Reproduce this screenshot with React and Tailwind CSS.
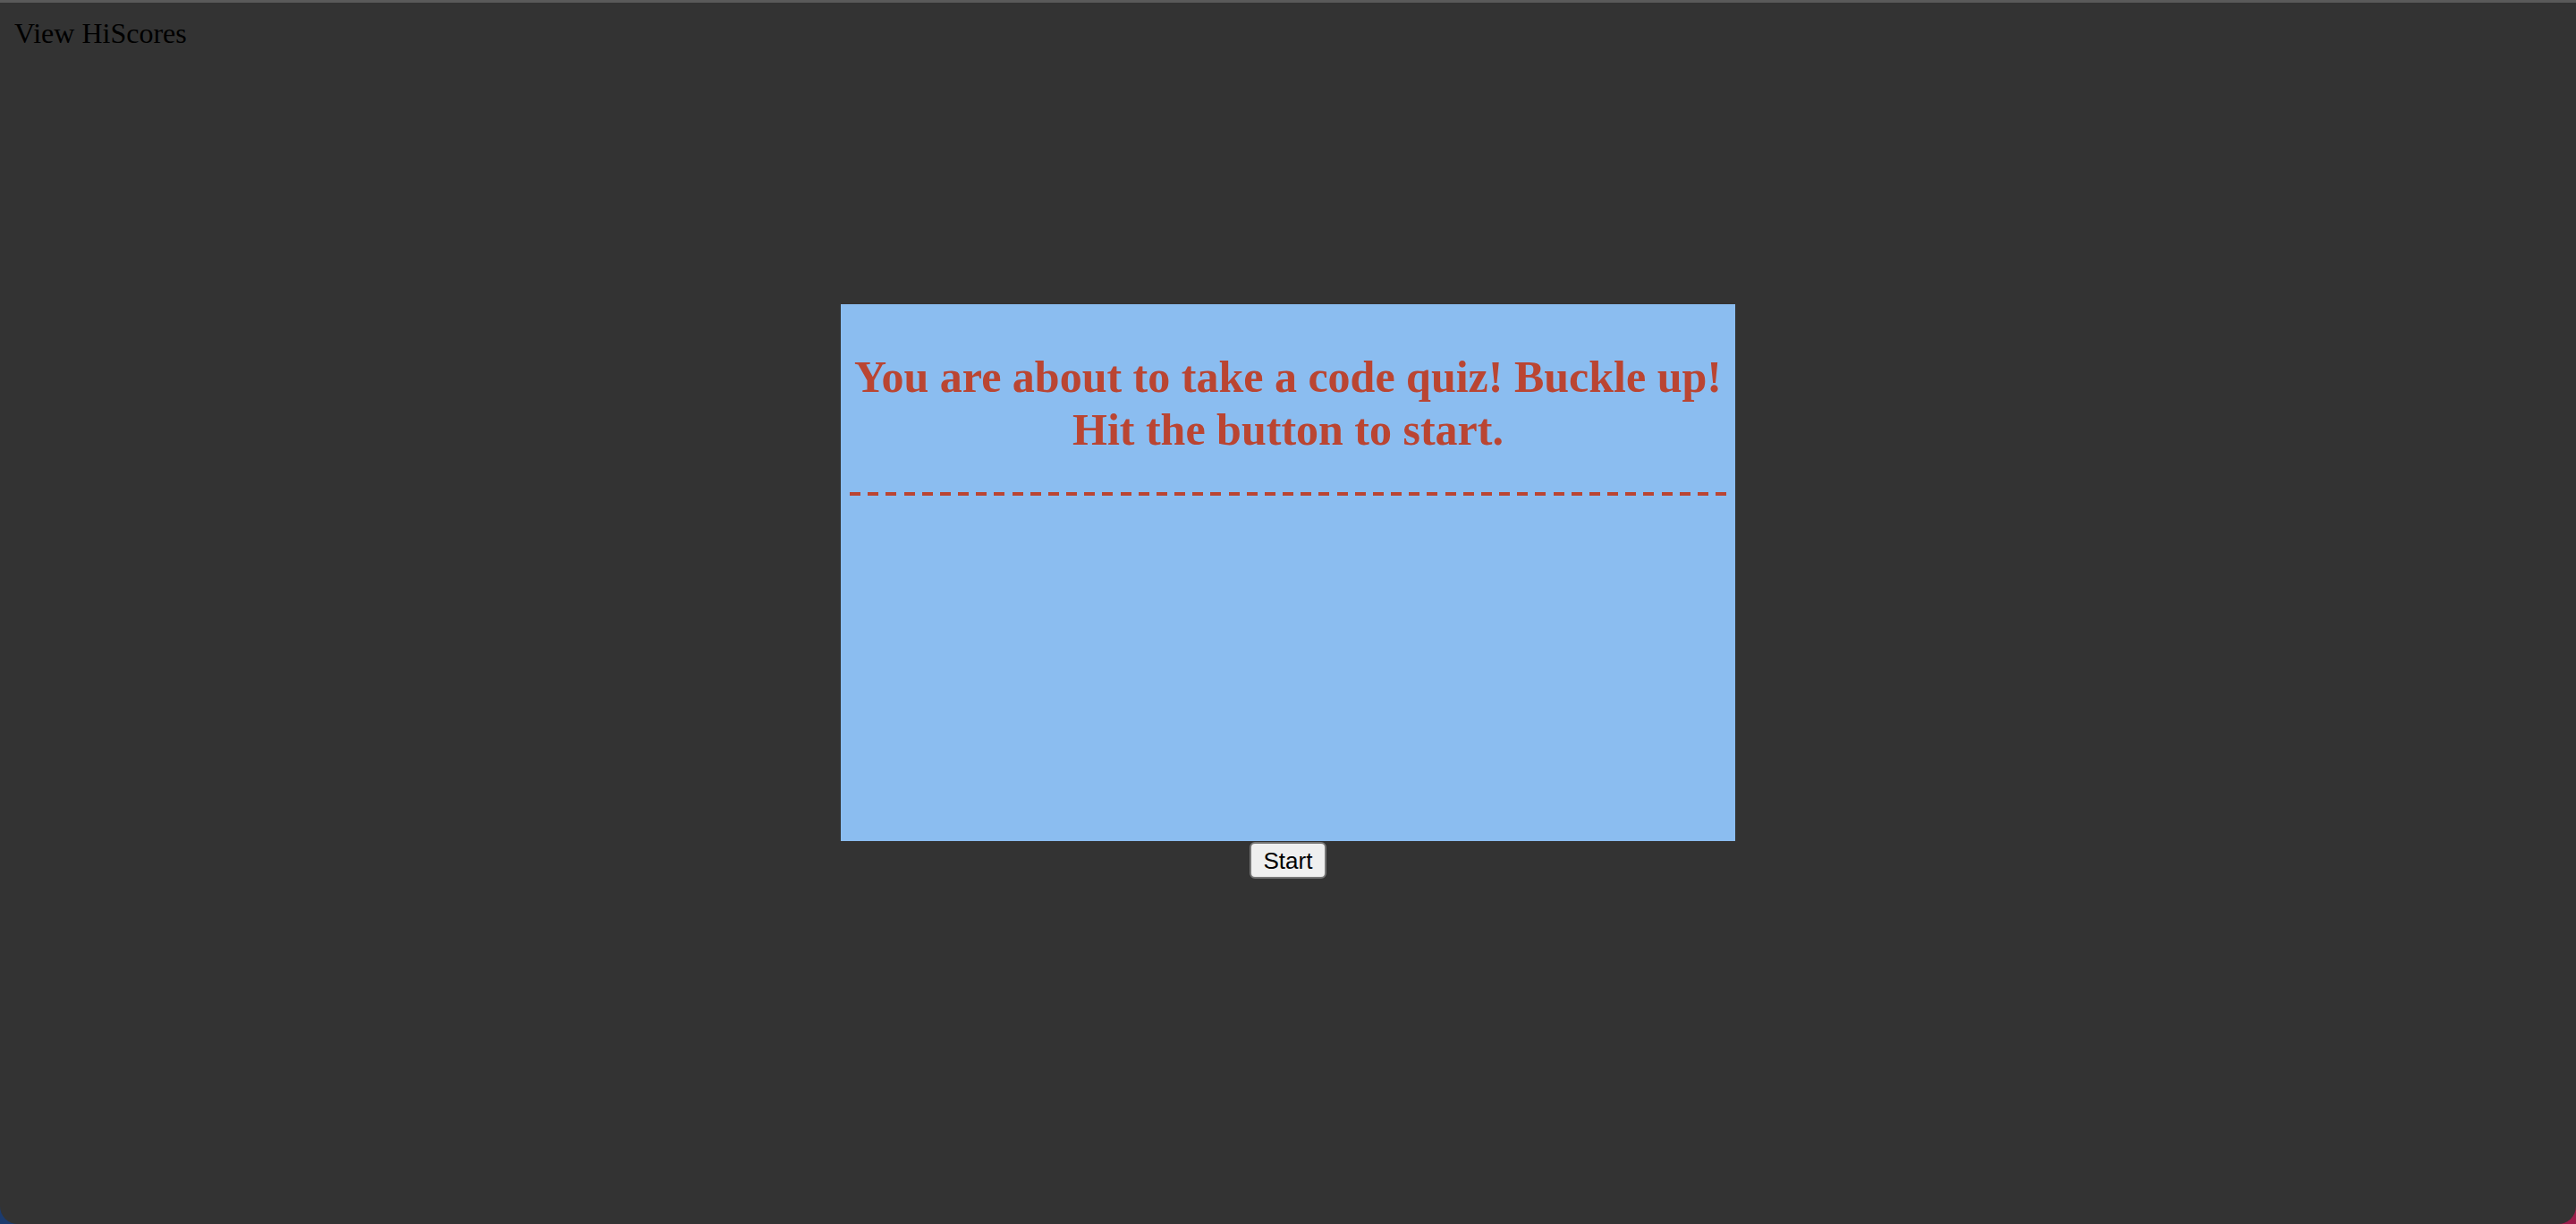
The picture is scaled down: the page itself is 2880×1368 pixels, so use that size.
import React from "react";

const App = () => {
  return (
    <div className="w-[2880px] h-[1368px] bg-linear-to-r from-[#1c3b6e] to-[#9b1c4a] overflow-hidden">
      <div className="h-full bg-[#333333] border-t-[3px] border-[#5a5a5a] rounded-b-[20px] flex flex-col">
        <div
          className="pl-4 pt-4 text-[32px] leading-[36px] text-black"
          style={{ fontFamily: '"Liberation Serif", "Times New Roman", serif' }}
        >
          View HiScores
        </div>

        <div className="mt-[285px] mx-auto w-[1000px] h-[600px] bg-[#8bbdf0] pt-[52px]">
          <h1
            className="mx-[10px] pb-[40px] text-center text-[50px] leading-[59px] font-bold text-[#ba4532]"
            style={{ fontFamily: '"Liberation Serif", "Times New Roman", serif' }}
          >
            You are about to take a code quiz! Buckle up!
            <br />
            Hit the button to start.
          </h1>
          {/* dashed rule under the heading, 49 dashes spread over 980px */}
          <div className="mx-[10px] h-[4px] bg-[repeating-linear-gradient(to_right,#ba4532_0px,#ba4532_12px,transparent_12px,transparent_20.1667px)]"></div>
        </div>

        <div className="flex justify-center mt-px">
          <button
            className="bg-[#efefef] border-2 border-[#767676] rounded-[6px] px-[13.5px] py-[3.5px] text-[26px] leading-[30px] text-black"
            style={{ fontFamily: '"Liberation Sans", Arial, sans-serif' }}
          >
            Start
          </button>
        </div>
      </div>
    </div>
  );
};

export default App;
